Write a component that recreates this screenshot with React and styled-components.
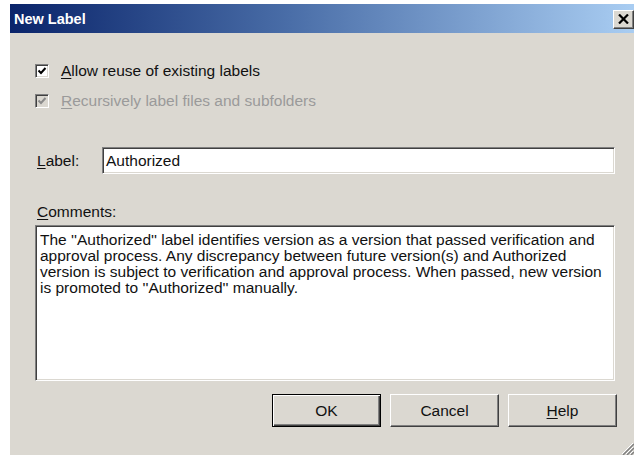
import React from 'react';
import styled, { createGlobalStyle } from 'styled-components';

const GlobalStyle = createGlobalStyle`
  html, body {
    margin: 0;
    padding: 0;
    background: #fff;
    overflow: hidden;
  }
  body {
    font-family: "Liberation Sans", Arial, sans-serif;
  }
`;

const face = '#dbd8d1';

const Window = styled.div`
  position: relative;
  box-sizing: border-box;
  margin: 4px 0 0 10px;
  width: calc(100vw - 10px);
  height: calc(100vh - 4px);
  background: ${face};
  display: flex;
  flex-direction: column;
  overflow: hidden;
`;

const TitleBar = styled.div`
  height: 29px;
  flex-shrink: 0;
  display: flex;
  align-items: center;
  justify-content: space-between;
  padding-left: 4px;
  background: linear-gradient(to right, #0a246a 0%, #4a6ea8 45%, #a9cdf2 100%);
`;

const Title = styled.span`
  color: #fff;
  font-weight: bold;
  font-size: 14.5px;
`;

const CloseButton = styled.div`
  width: 21px;
  height: 19px;
  box-sizing: border-box;
  margin-top: 1px;
  background: ${face};
  border: 1px solid;
  border-color: #fff #404040 #404040 #fff;
  box-shadow: inset -1px -1px #808080;
  display: flex;
  align-items: center;
  justify-content: center;
`;

const Body = styled.div`
  flex: 1;
  display: flex;
  flex-direction: column;
  padding: 29px 19px 0 25px;
  font-size: 15.5px;
  color: #111;
`;

const CheckRow = styled.label`
  display: flex;
  align-items: center;
  gap: 12px;
  height: 18px;
  margin-bottom: ${p => p.$gap || 0}px;
  color: ${p => (p.$disabled ? '#9a9a9a' : '#111')};
`;

const CheckBox = styled.span`
  width: 14px;
  height: 14px;
  box-sizing: border-box;
  background: ${p => (p.$disabled ? face : '#fff')};
  border: 1px solid;
  border-color: #808080 #fff #fff #808080;
  box-shadow: inset 1px 1px #404040, inset -1px -1px ${face};
  display: flex;
  align-items: center;
  justify-content: center;
`;

const Key = styled.span`
  text-decoration: underline;
  text-underline-offset: 2px;
`;

const FieldRow = styled.div`
  display: flex;
  align-items: center;
  margin-top: 37px;
  height: 27px;
`;

const FieldLabel = styled.span`
  width: 65px;
  padding-left: 2px;
  flex-shrink: 0;
`;

const Sunken = styled.div`
  box-sizing: border-box;
  background: #fff;
  border: 1px solid;
  border-color: #808080 #fff #fff #808080;
  box-shadow: inset 1px 1px #404040, inset -1px -1px ${face};
`;

const TextField = styled(Sunken)`
  flex: 1;
  height: 27px;
  display: flex;
  align-items: center;
  padding-left: 3px;
`;

const SectionLabel = styled.div`
  margin-top: 30px;
  padding-left: 2px;
  height: 16px;
  line-height: 16px;
`;

const CommentBox = styled(Sunken)`
  margin-top: 5px;
  height: 156px;
  padding: 6px 4px 0 4px;
  line-height: 16px;
  white-space: pre;
`;

const ButtonBar = styled.div`
  display: flex;
  justify-content: flex-end;
  gap: 9px;
  margin-top: 13px;
  margin-right: -2px;
`;

const Button = styled.div`
  width: 109px;
  height: 33px;
  box-sizing: border-box;
  display: flex;
  align-items: center;
  justify-content: center;
  background: ${face};
  border: 1px solid;
  border-color: ${p => (p.$default ? '#000' : '#fff #404040 #404040 #fff')};
  box-shadow: ${p =>
    p.$default
      ? 'inset 1px 1px #fff, inset -1px -1px #404040, inset -2px -2px #808080'
      : 'inset -1px -1px #808080'};
`;

const Grip = styled.svg`
  position: absolute;
  right: 0;
  bottom: 0;
`;

const Check = ({ color }) => (
  <svg width="10" height="10" viewBox="0 0 10 10">
    <polyline points="1.5,4.5 4,7 8.5,2" fill="none" stroke={color} strokeWidth="2" />
  </svg>
);

const comment = [
  'The \'\'Authorized\'\' label identifies version as a version that passed verification and',
  'approval process. Any discrepancy between future version(s) and Authorized',
  'version is subject to verification and approval process. When passed, new version',
  'is promoted to \'\'Authorized\'\' manually.',
].join('\n');

export default function App() {
  return (
    <>
      <GlobalStyle />
      <Window>
        <TitleBar>
          <Title>New Label</Title>
          <CloseButton>
            <svg width="11" height="10" viewBox="0 0 11 10">
              <path d="M1 0.5 L10 9.5 M10 0.5 L1 9.5" stroke="#000" strokeWidth="2.2" />
            </svg>
          </CloseButton>
        </TitleBar>
        <Body>
          <CheckRow $gap={12}>
            <CheckBox>
              <Check color="#000" />
            </CheckBox>
            <span>
              <Key>A</Key>llow reuse of existing labels
            </span>
          </CheckRow>
          <CheckRow $disabled>
            <CheckBox $disabled>
              <Check color="#8a8a8a" />
            </CheckBox>
            <span>
              <Key>R</Key>ecursively label files and subfolders
            </span>
          </CheckRow>
          <FieldRow>
            <FieldLabel>
              <Key>L</Key>abel:
            </FieldLabel>
            <TextField>Authorized</TextField>
          </FieldRow>
          <SectionLabel>
            <Key>C</Key>omments:
          </SectionLabel>
          <CommentBox>{comment}</CommentBox>
          <ButtonBar>
            <Button $default>OK</Button>
            <Button>Cancel</Button>
            <Button>
              <span>
                <Key>H</Key>elp
              </span>
            </Button>
          </ButtonBar>
        </Body>
        <Grip width="14" height="14" viewBox="0 0 14 14">
          <path d="M13 2 L2 13 M13 6 L6 13 M13 10 L10 13" stroke="#fff" strokeWidth="1" />
          <path d="M14 3 L3 14 M14 7 L7 14 M14 11 L11 14" stroke="#808080" strokeWidth="1.5" />
        </Grip>
      </Window>
    </>
  );
}
